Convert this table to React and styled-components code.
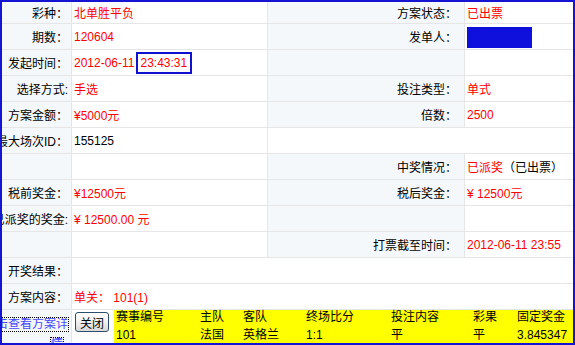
import React from "react"
import styled, { createGlobalStyle } from "styled-components"

const GlobalStyle = createGlobalStyle`
  html, body {
    margin: 0;
    padding: 0;
    background: #ffffff;
  }
  body {
    font-family: "Liberation Sans", "Noto Sans CJK SC", sans-serif;
    font-size: 12px;
    color: #000000;
  }
`

const RED = "#ff0000"
const BLUE = "#1414d2"

const Frame = styled.div`
  box-sizing: border-box;
  width: 575px;
  height: 345px;
  border: 2px solid ${BLUE};
  background: #e6e6e6;
  display: grid;
  grid-template-columns: 69px 195px 196px 108px;
  grid-template-rows: 21px repeat(11, 25px) 33px;
  gap: 1px;
  overflow: hidden;
`

const Label = styled.div`
  background: #f5f8fb;
  display: flex;
  align-items: center;
  justify-content: flex-end;
  padding-right: ${p => (p.$wide ? 7 : 3)}px;
  white-space: nowrap;
  overflow: hidden;
  grid-column: span ${p => p.$span || 1};
`

const Value = styled.div`
  background: #ffffff;
  display: flex;
  align-items: center;
  padding-left: 2px;
  white-space: nowrap;
  overflow: hidden;
  color: ${p => p.$color || RED};
  grid-column: span ${p => p.$span || 1};
`

const Black = styled.span`
  color: #000000;
`

const TimeBox = styled.span`
  display: inline-block;
  margin-left: 1px;
  padding: 2px 3px;
  line-height: 14px;
  border: 2px solid #1010d0;
`

const Masked = styled.span`
  display: block;
  width: 65px;
  height: 21px;
  margin-top: 1px;
  background: #1010dc;
`

const LinkCell = styled.div`
  background: #f5f8fb;
  display: flex;
  flex-direction: column;
  align-items: flex-end;
  gap: 7px;
  padding: 8px 3px 0 0;
  white-space: nowrap;
  overflow: hidden;
`

const LinkLine = styled.a`
  display: block;
  color: #4646ff;
  text-decoration: none;
  line-height: 13px;
  outline: 1px dotted #000000;
  margin-right: ${p => p.$shift || 0}px;
`

const ActionCell = styled.div`
  grid-column: span 3;
  background: #ffffff;
  display: flex;
  align-items: stretch;
`

const CloseButton = styled.button`
  box-sizing: border-box;
  align-self: flex-start;
  margin: 2px 0 0 3px;
  width: 34px;
  height: 20px;
  padding: 0;
  font: inherit;
  color: #000000;
  border: 1px solid #2c4e6c;
  border-radius: 3px;
  background: linear-gradient(#ffffff, #f0f0f0 50%, #d8d8d8);
`

const Matches = styled.div`
  margin-left: 5px;
  flex: 1;
  background: #ffff00;
  display: grid;
  grid-template-columns: 84px 43px 63px 85px 82px 44px 58px;
  grid-template-rows: 16px 17px;
  color: #000000;
`

const MatchCell = styled.div`
  padding-left: 2px;
  display: flex;
  align-items: ${p => (p.$head ? "flex-start" : "flex-end")};
  line-height: 15px;
  white-space: nowrap;
`

const heads = ["赛事编号", "主队", "客队", "终场比分", "投注内容", "彩果", "固定奖金"]
const rowData = ["101", "法国", "英格兰", "1:1", "平", "平", "3.845347"]

const App = () => (
  <>
    <GlobalStyle />
    <Frame>
      <Label>彩种：</Label>
      <Value>北单胜平负</Value>
      <Label $wide>方案状态：</Label>
      <Value>已出票</Value>

      <Label>期数：</Label>
      <Value>120604</Value>
      <Label $wide>发单人：</Label>
      <Value><Masked /></Value>

      <Label>发起时间：</Label>
      <Value>2012-06-11<TimeBox>23:43:31</TimeBox></Value>
      <Label />
      <Value />

      <Label>选择方式:</Label>
      <Value>手选</Value>
      <Label $wide>投注类型：</Label>
      <Value>单式</Value>

      <Label>方案金额：</Label>
      <Value>¥5000元</Value>
      <Label $wide>倍数：</Label>
      <Value>2500</Value>

      <Label>最大场次ID：</Label>
      <Value $color="#000000">155125</Value>
      <Value $span={2} />

      <Label />
      <Value />
      <Label $wide>中奖情况：</Label>
      <Value>已派奖<Black>（已出票）</Black></Value>

      <Label>税前奖金：</Label>
      <Value>¥12500元</Value>
      <Label $wide>税后奖金：</Label>
      <Value>¥ 12500元</Value>

      <Label>已派奖的奖金:</Label>
      <Value>¥ 12500.00 元</Value>
      <Label />
      <Value />

      <Label />
      <Value />
      <Label $wide>打票截至时间：</Label>
      <Value>2012-06-11 23:55</Value>

      <Label>开奖结果：</Label>
      <Value $span={3} />

      <Label>方案内容：</Label>
      <Value $span={3}>单关： 101(1)</Value>

      <LinkCell>
        <LinkLine href="#">点击查看方案详</LinkLine>
        <LinkLine href="#" $shift={5}>情</LinkLine>
      </LinkCell>
      <ActionCell>
        <CloseButton>关闭</CloseButton>
        <Matches>
          {heads.map(h => (
            <MatchCell key={h} $head>{h}</MatchCell>
          ))}
          {rowData.map((v, i) => (
            <MatchCell key={i}>{v}</MatchCell>
          ))}
        </Matches>
      </ActionCell>
    </Frame>
  </>
)

export default App
